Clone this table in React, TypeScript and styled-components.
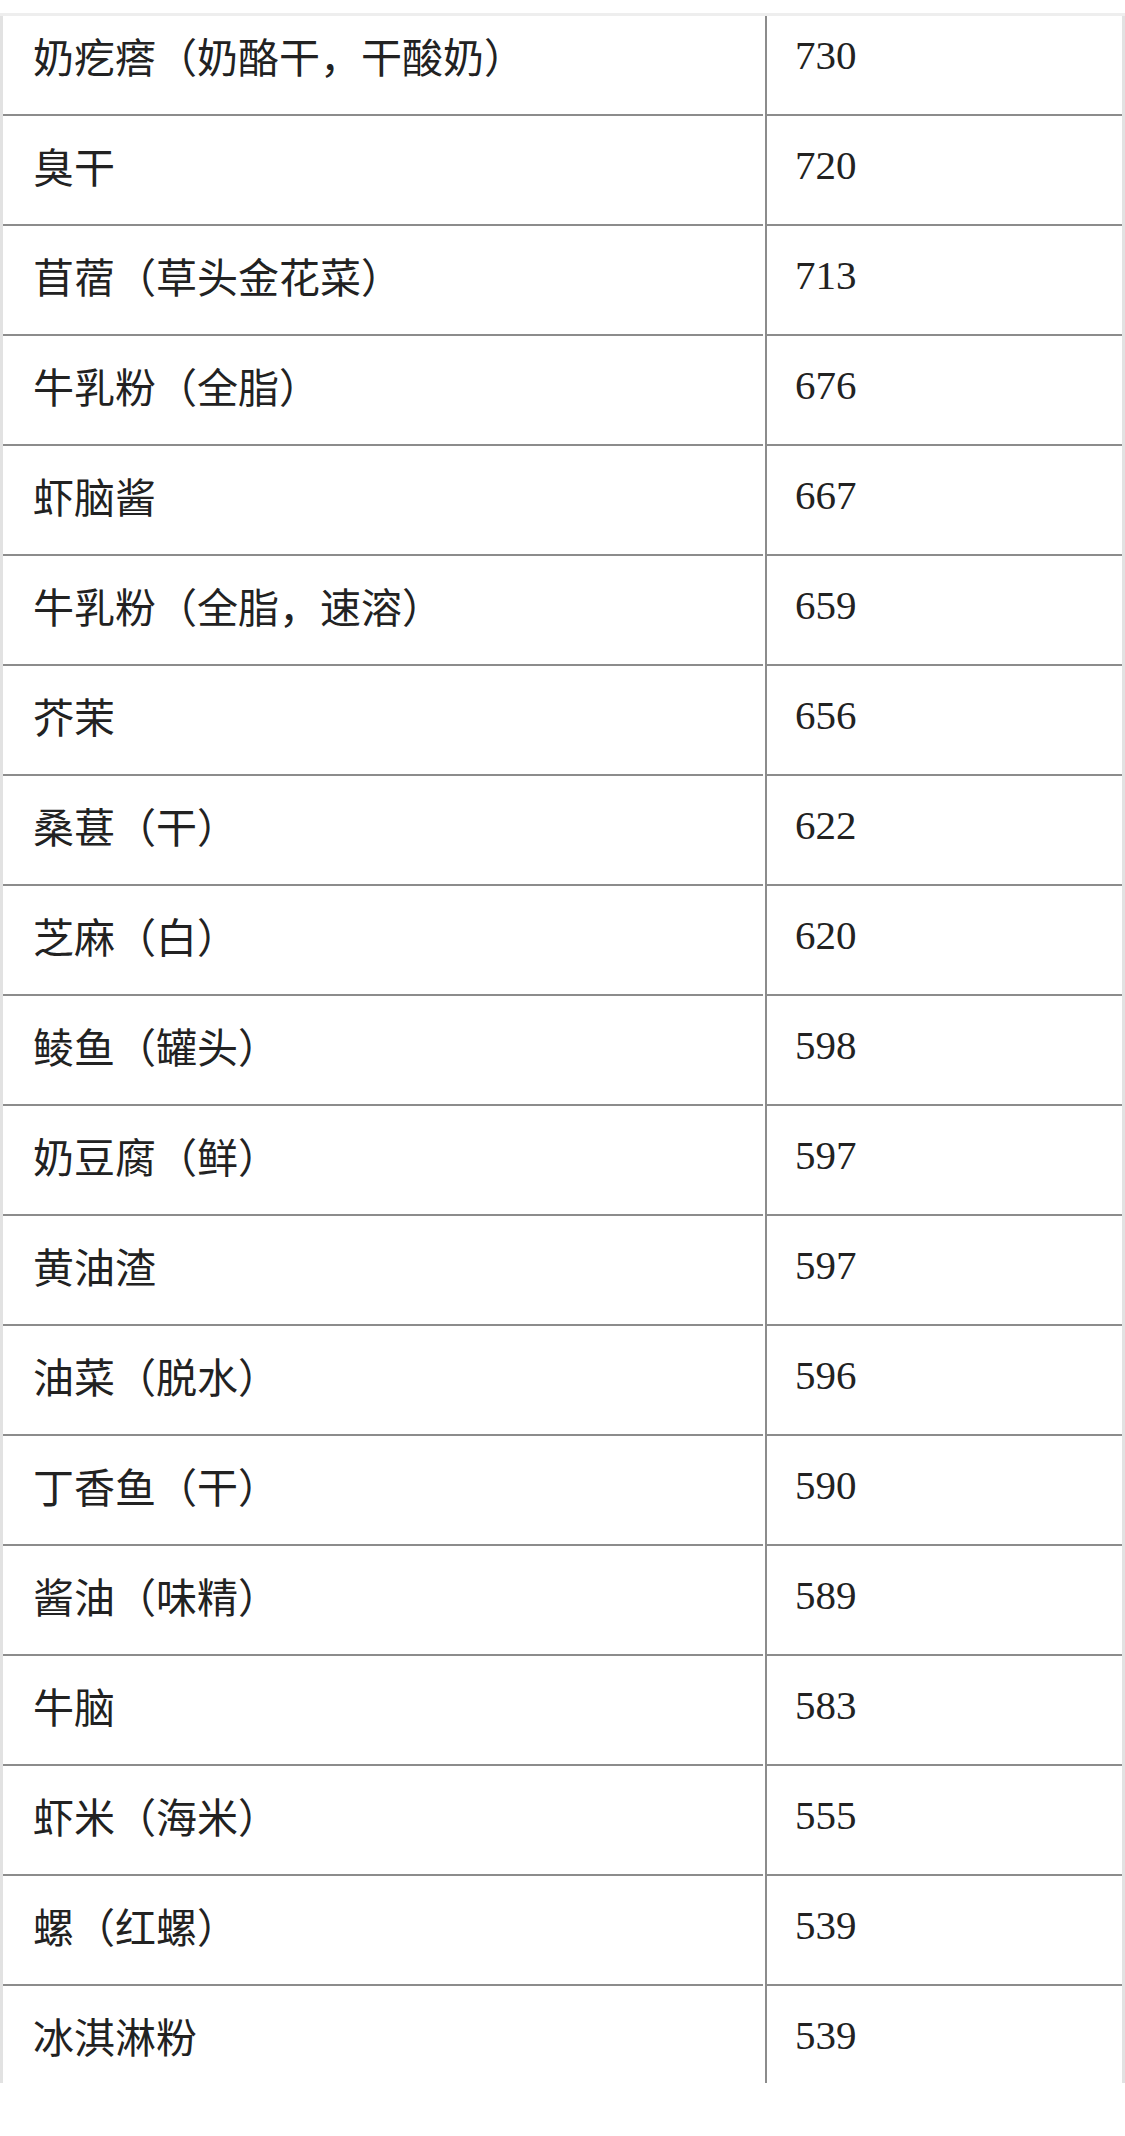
import React from 'react';
import styled, { createGlobalStyle } from 'styled-components';

const GlobalStyle = createGlobalStyle`
  html, body {
    margin: 0;
    padding: 0;
    background: #ffffff;
  }
  body {
    font-family: "Liberation Serif", "Noto Sans CJK SC", serif;
    color: #222222;
  }
`;

const Page = styled.div`
  width: 1125px;
  height: 2136px;
  padding-top: 13px;
  box-sizing: border-box;
  background: #ffffff;
`;

const Frame = styled.div`
  border-top: 3px solid #eeeeee;
`;

const Viewport = styled.div`
  height: 2067px;
  overflow: hidden;
  border-left: 3px solid #e2e2e2;
  border-right: 3px solid #e2e2e2;
`;

const Rows = styled.div`
  margin-top: -10px;
`;

const Row = styled.div`
  display: grid;
  grid-template-columns: 760px 2px 357px;
  height: 110px;
`;

const NameCell = styled.div`
  display: flex;
  align-items: center;
  padding: 0 0 10px 30px;
  border-bottom: 2px solid #8c8c8c;
  font-family: "Noto Sans CJK SC", sans-serif;
  font-size: 41px;
  white-space: nowrap;
`;

const ValueCell = styled.div`
  display: flex;
  align-items: center;
  padding: 0 0 10px 28px;
  border-left: 2px solid #8c8c8c;
  border-bottom: 2px solid #8c8c8c;
  font-family: "Liberation Serif", serif;
  font-size: 41px;
`;

interface Food {
  name: string;
  value: number;
}

const foods: Food[] = [
  { name: '奶疙瘩（奶酪干，干酸奶）', value: 730 },
  { name: '臭干', value: 720 },
  { name: '苜蓿（草头金花菜）', value: 713 },
  { name: '牛乳粉（全脂）', value: 676 },
  { name: '虾脑酱', value: 667 },
  { name: '牛乳粉（全脂，速溶）', value: 659 },
  { name: '芥茉', value: 656 },
  { name: '桑葚（干）', value: 622 },
  { name: '芝麻（白）', value: 620 },
  { name: '鲮鱼（罐头）', value: 598 },
  { name: '奶豆腐（鲜）', value: 597 },
  { name: '黄油渣', value: 597 },
  { name: '油菜（脱水）', value: 596 },
  { name: '丁香鱼（干）', value: 590 },
  { name: '酱油（味精）', value: 589 },
  { name: '牛脑', value: 583 },
  { name: '虾米（海米）', value: 555 },
  { name: '螺（红螺）', value: 539 },
  { name: '冰淇淋粉', value: 539 },
];

const App: React.FC = () => {
  return (
    <Page>
      <GlobalStyle />
      <Frame>
        <Viewport>
          <Rows>
            {foods.map((food, i) => (
              <Row key={i}>
                <NameCell>{food.name}</NameCell>
                <div />
                <ValueCell>{food.value}</ValueCell>
              </Row>
            ))}
          </Rows>
        </Viewport>
      </Frame>
    </Page>
  );
};

export default App;
